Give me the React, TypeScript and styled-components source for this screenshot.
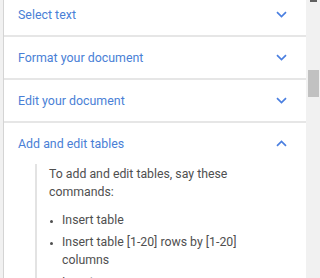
import styled, { createGlobalStyle } from 'styled-components'

const GlobalStyle = createGlobalStyle`
  html, body {
    margin: 0;
    padding: 0;
    background: #fff;
    overflow: hidden;
  }
  body {
    font-family: Roboto, "Liberation Sans", Arial, sans-serif;
  }
`

const sections = [
  { title: 'Select text', open: false },
  { title: 'Format your document', open: false },
  { title: 'Edit your document', open: false },
  { title: 'Add and edit tables', open: true },
]

const tableCommands = [
  'Insert table',
  'Insert table [1-20] rows by [1-20] columns',
  'Insert row',
  'Insert column',
]

function Chevron({ up }: { up?: boolean }) {
  return (
    <svg width="11" height="7" viewBox="0 0 11 7">
      <path
        d={up ? 'M1 5.8 L5.5 1.5 L10 5.8' : 'M1 1.2 L5.5 5.5 L10 1.2'}
        fill="none"
        stroke="#4a7fe0"
        strokeWidth="1.7"
      />
    </svg>
  )
}

function App() {
  return (
    <Page>
      <GlobalStyle />
      <EdgeStrip />
      <Panel>
        {sections.map((s) => (
          <Section key={s.title}>
            <Header>
              <Title>{s.title}</Title>
              <Chevron up={s.open} />
            </Header>
            {s.open && (
              <Body>
                <Intro>To add and edit tables, say these commands:</Intro>
                <List>
                  {tableCommands.map((c) => (
                    <Item key={c}>{c}</Item>
                  ))}
                </List>
              </Body>
            )}
          </Section>
        ))}
      </Panel>
      <Scrollbar>
        <ArrowCap />
        <Thumb />
      </Scrollbar>
    </Page>
  )
}

const Page = styled.div`
  display: flex;
  width: 320px;
  height: 278px;
  overflow: hidden;
`

const EdgeStrip = styled.div`
  width: 3px;
  flex-shrink: 0;
  background: #f1f1f1;
  border-right: 1px solid #d4d4d4;
`

const Panel = styled.div`
  flex: 1;
  margin-top: -6px;
  background: #fff;
`

const Section = styled.div`
  border-bottom: 2px solid #e6e6e6;
`

const Header = styled.div`
  display: flex;
  align-items: center;
  justify-content: space-between;
  height: 41px;
  padding: 0 19px 0 14px;
`

const Title = styled.span`
  font-size: 12.4px;
  color: #4a7fd6;
`

const Body = styled.div`
  margin: 0 20px 0 31px;
  padding: 1px 0 20px 12px;
  border-left: 2px solid #e3e3e3;
`

const Intro = styled.p`
  margin: 0 0 10px;
  font-size: 12.3px;
  line-height: 18px;
  color: #4f4f4f;
`

const List = styled.ul`
  margin: 0;
  padding: 0 0 0 13px;
`

const Item = styled.li`
  font-size: 12.3px;
  line-height: 18px;
  color: #4f4f4f;
  margin-bottom: 4px;

  &::marker {
    font-size: 9px;
  }
`

const Scrollbar = styled.div`
  width: 14px;
  flex-shrink: 0;
  background: #f1f1f1;
  display: flex;
  flex-direction: column;
  align-items: center;
`

const ArrowCap = styled.div`
  width: 7px;
  height: 2px;
  background: #606060;
  margin-bottom: 68px;
`

const Thumb = styled.div`
  width: 11px;
  height: 27px;
  background: #c1c1c1;
`

export default App
